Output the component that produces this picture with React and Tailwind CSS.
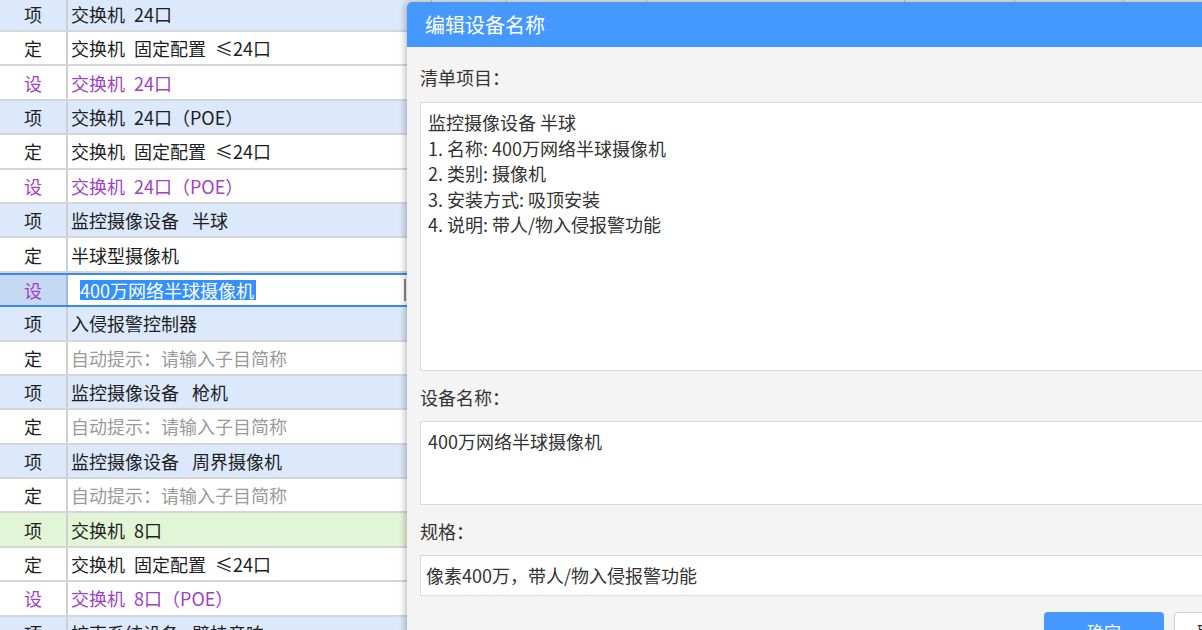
import React from 'react';

const sp = '\u2002';

const rows = [
  { t: '项', s: `交换机${sp}24口`, k: 'item' },
  { t: '定', s: `交换机${sp}固定配置${sp}≤24口`, k: 'def' },
  { t: '设', s: `交换机${sp}24口`, k: 'set' },
  { t: '项', s: `交换机${sp}24口（POE）`, k: 'item' },
  { t: '定', s: `交换机${sp}固定配置${sp}≤24口`, k: 'def' },
  { t: '设', s: `交换机${sp}24口（POE）`, k: 'set' },
  { t: '项', s: `监控摄像设备${sp} 半球`, k: 'item' },
  { t: '定', s: '半球型摄像机', k: 'def' },
  { t: '设', s: '400万网络半球摄像机', k: 'sel' },
  { t: '项', s: '入侵报警控制器', k: 'item' },
  { t: '定', s: '自动提示：请输入子目简称', k: 'hint' },
  { t: '项', s: `监控摄像设备${sp} 枪机`, k: 'item' },
  { t: '定', s: '自动提示：请输入子目简称', k: 'hint' },
  { t: '项', s: `监控摄像设备${sp} 周界摄像机`, k: 'item' },
  { t: '定', s: '自动提示：请输入子目简称', k: 'hint' },
  { t: '项', s: `交换机${sp}8口`, k: 'green' },
  { t: '定', s: `交换机${sp}固定配置${sp}≤24口`, k: 'def' },
  { t: '设', s: `交换机${sp}8口（POE）`, k: 'set' },
  { t: '项', s: `扩声系统设备${sp} 壁挂音响`, k: 'item' },
];

const font = { fontFamily: '"Noto Sans CJK SC", "Noto Sans", sans-serif' };

function Row({ r }) {
  if (r.k === 'sel') {
    return (
      <div className="flex h-[34.4px] border-y-2 border-[#3a89f3]">
        <div className="w-[68px] shrink-0 border-r-2 border-[#9fb9dc] bg-[#c6d9f2] flex items-center justify-center text-[#a23fc4]">
          {r.t}
        </div>
        <div className="flex-1 bg-white flex items-center pl-[12px]">
          <span className="bg-[#3390ff] text-white leading-[20px] pr-[2px]">{r.s}</span>
          <div className="ml-auto mr-[1px] w-[2px] h-[22px] bg-[#8a8a8a]" />
        </div>
      </div>
    );
  }
  const bg = r.k === 'item' ? 'bg-[#dce8fb]' : r.k === 'green' ? 'bg-[#e3f5d7]' : 'bg-white';
  const tc = r.k === 'set' ? 'text-[#a23fc4]' : 'text-[#1e1e1e]';
  const sc = r.k === 'set' ? 'text-[#a23fc4]' : r.k === 'hint' ? 'text-[#9a9a9a]' : 'text-[#1e1e1e]';
  return (
    <div className={`flex h-[34.4px] border-b-2 border-[#d6d6d6] ${bg}`}>
      <div className={`w-[68px] shrink-0 border-r-2 border-[#cfcfcf] flex items-center justify-center ${tc}`}>
        {r.t}
      </div>
      <div className={`flex-1 flex items-center pl-[3px] whitespace-pre ${sc}`}>{r.s}</div>
    </div>
  );
}

export default function App() {
  return (
    <div className="relative w-[1202px] h-[630px] overflow-hidden bg-white" style={font}>
      <div className="flex h-full">
        <div className="w-[407px] shrink-0 mt-[-2.4px] text-[18px] leading-none">
          {rows.map((r, i) => (
            <Row key={i} r={r} />
          ))}
        </div>
        <div className="flex-1 flex h-[3px] bg-[#e4e4e4]">
          <div className="w-[25px] border-r border-[#b8b8b8]" />
          <div className="w-[75px] border-r border-[#b8b8b8]" />
          <div className="w-[140px] border-r border-[#b8b8b8]" />
          <div className="w-[258px] border-r border-[#b8b8b8]" />
          <div className="w-[110px] border-r border-[#b8b8b8]" />
          <div className="w-[109px] border-r border-[#b8b8b8]" />
        </div>
      </div>

      <div className="absolute left-[407px] top-[2px] w-[860px] h-[700px] rounded-t-[5px] overflow-hidden bg-[#f4f4f4] shadow-[-2px_0_6px_rgba(0,0,0,0.25)]">
        <div className="h-[45px] bg-[#4599fe] flex items-center pl-[18px] text-white text-[20px]">
          编辑设备名称
        </div>
        <div className="pl-[13px] pt-[18px] text-[18px] text-[#333]">
          <div className="leading-[25px] mb-[12px]">清单项目：</div>
          <div className="h-[269px] bg-white border border-[#dadada] px-[7px] py-[7px] leading-[25.5px] whitespace-pre-line">
            {'监控摄像设备 半球\n1. 名称: 400万网络半球摄像机\n2. 类别: 摄像机\n3. 安装方式: 吸顶安装\n4. 说明: 带人/物入侵报警功能'}
          </div>
          <div className="leading-[25px] mt-[14px] mb-[11px]">设备名称：</div>
          <div className="h-[84px] bg-white border border-[#dadada] px-[7px] py-[7px] leading-[25.5px]">
            400万网络半球摄像机
          </div>
          <div className="leading-[25px] mt-[14px] mb-[11px]">规格：</div>
          <div className="h-[41px] bg-white border border-[#dadada] px-[5px] flex items-center">
            像素400万，带人/物入侵报警功能
          </div>
          <div className="flex mt-[16px] pl-[624px] gap-[10px]">
            <div className="w-[120px] h-[40px] rounded-[4px] bg-[#4599fe] text-white flex items-center justify-center text-[17px]">
              确定
            </div>
            <div className="w-[80px] h-[40px] rounded-[4px] bg-white border border-[#cfcfcf] flex items-center justify-center text-[17px]">
              取消
            </div>
          </div>
        </div>
      </div>
    </div>
  );
}
